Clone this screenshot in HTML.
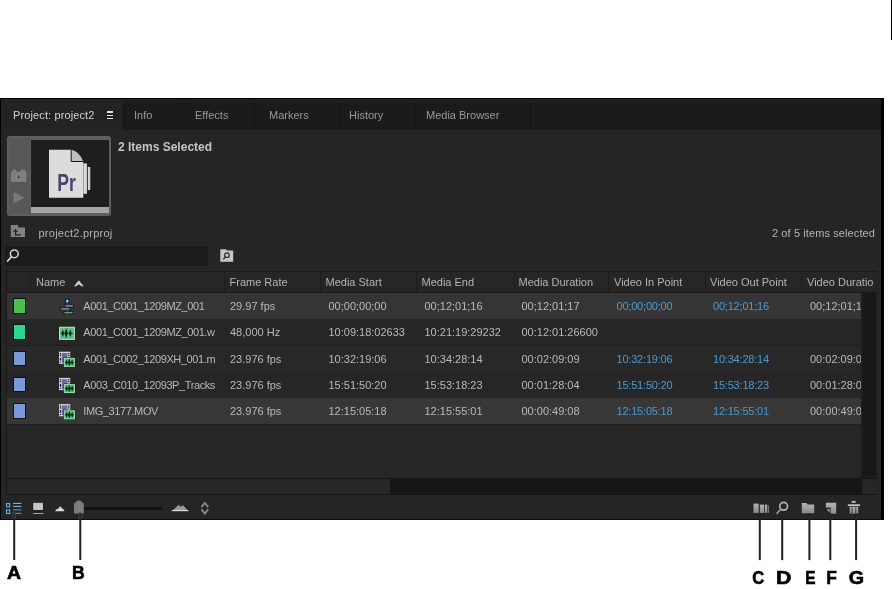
<!DOCTYPE html>
<html><head><meta charset="utf-8">
<style>
*{margin:0;padding:0;box-sizing:border-box}
html,body{width:892px;height:589px;overflow:hidden;background:#fff;position:relative}
body{font-family:"Liberation Sans",sans-serif}
.a{position:absolute}
#root{position:absolute;left:0;top:0;width:892px;height:589px;will-change:transform}
.t{position:absolute;white-space:pre;font-size:11px;line-height:11px;color:#b9b9b9}
</style></head><body><div id="root">
<div class="a" style="left:891px;top:0;width:1px;height:40px;background:#000"></div>
<div class="a" style="left:0;top:98px;width:884px;height:422px;background:#252525;border-left:1px solid #000;border-top:1px solid #000;border-right:3px solid #000;border-bottom:1px solid #0c0c0c"></div>
<div class="a" style="left:1px;top:99px;width:880px;height:30px;background:#1f1f1f"></div>
<div class="a" style="left:122px;top:103px;width:759px;height:25.5px;background:#1b1b1b"></div>
<div class="a" style="left:122px;top:128.5px;width:759px;height:1px;background:#181818"></div>
<div class="a" style="left:1px;top:99px;width:121px;height:30px;background:#232323"></div>
<div class="t" style="left:13px;top:109.5px;color:#d2d2d2;letter-spacing:0.12px">Project: project2</div>
<div class="a" style="left:107px;top:111.4px;width:6px;height:1.3px;background:#e4e4e4"></div>
<div class="a" style="left:107px;top:114.6px;width:6px;height:1.3px;background:#e4e4e4"></div>
<div class="a" style="left:107px;top:117.8px;width:6px;height:1.3px;background:#e4e4e4"></div>
<div class="a" style="left:182.5px;top:103px;width:2.5px;height:25px;background:#171717"></div>
<div class="a" style="left:253px;top:103px;width:2.5px;height:25px;background:#171717"></div>
<div class="a" style="left:337.5px;top:103px;width:2.5px;height:25px;background:#171717"></div>
<div class="a" style="left:413.5px;top:103px;width:2.5px;height:25px;background:#171717"></div>
<div class="a" style="left:529.3px;top:103px;width:2.5px;height:25px;background:#171717"></div>
<div class="t" style="left:134px;top:109.5px;color:#989898">Info</div>
<div class="t" style="left:195px;top:109.5px;color:#989898">Effects</div>
<div class="t" style="left:269px;top:109.5px;color:#989898">Markers</div>
<div class="t" style="left:349px;top:109.5px;color:#989898">History</div>
<div class="t" style="left:426px;top:109.5px;color:#989898">Media Browser</div>
<div class="a" style="left:7px;top:136px;width:104px;height:80px;background:#5e5e5e;border-radius:2.5px"></div>
<div class="a" style="left:9px;top:138px;width:21px;height:76px;background:#575757"></div>
<div class="a" style="left:31px;top:140px;width:78px;height:67px;background:#1e1e1e"></div>
<div class="a" style="left:31px;top:207px;width:78px;height:6px;background:#a6a6a6"></div>
<div class="t" style="left:118px;top:141.1px;font-size:12px;line-height:12px;font-weight:bold;color:#c4c4c4">2 Items Selected</div>
<div class="t" style="left:38.5px;top:227.7px;color:#b4b4b4;letter-spacing:0.25px">project2.prproj</div>
<div class="t" style="left:772px;top:227.8px;color:#b4b4b4;letter-spacing:0.1px">2 of 5 items selected</div>
<div class="a" style="left:5px;top:246px;width:203px;height:20px;background:#1c1c1c"></div>
<!-- thumbnail icons -->
<svg class="a" style="left:0;top:0" width="892" height="589" viewBox="0 0 892 589">
  <!-- camera -->
  <g fill="#7e7e7e">
    <rect x="11" y="171.5" width="15.5" height="10.5" rx="0.5"/>
    <rect x="12.5" y="169.5" width="3.5" height="2.5"/>
    <rect x="21" y="169.5" width="4" height="2.5"/>
  </g>
  <circle cx="18.7" cy="177" r="2.5" fill="#5a5a5a" stroke="#9a9a9a" stroke-width="1"/>
  <!-- play -->
  <path d="M13.5 192 L24.5 197.7 L13.5 203.4 Z" fill="#787878"/>
  <!-- project folder icon -->
  <path d="M10.8 225 H18.1 V227.5 H25 V237 H10.8 Z" fill="#828282"/>
  <path d="M15.6 229 V234.8 H20.8 M13.4 231.4 H17.6" fill="none" stroke="#1e1e1e" stroke-width="1.2"/>
  <!-- Pr doc -->
  <rect x="86.8" y="166.5" width="4" height="24.2" fill="#d2d2d2" stroke="#111" stroke-width="0.8"/>
  <rect x="83" y="163" width="4.3" height="31.2" fill="#dadada" stroke="#111" stroke-width="0.8"/>
  <path d="M49 149.8 H71.2 L83.3 161.5 V197.7 H49 Z" fill="#dcdcdc"/>
  <path d="M71.2 149.8 Q79 151 83.3 161.5 H71.2 Z" fill="#bdbdbd"/>
  <path d="M71.2 149.8 V161.5 H83.3" fill="none" stroke="#111" stroke-width="1"/>
  <text x="57.2" y="190.5" font-family="Liberation Sans" font-weight="bold" font-size="23.5" fill="#4e406c" textLength="18.6" lengthAdjust="spacingAndGlyphs">Pr</text>
  <!-- search magnifier -->
  <circle cx="14.3" cy="253.8" r="3.9" fill="none" stroke="#d4d4d4" stroke-width="1.5"/>
  <path d="M11.4 256.8 L7.6 261" stroke="#d4d4d4" stroke-width="1.8" stroke-linecap="round"/>
  <!-- folder search -->
  <path d="M220.3 249.3 H226 L227 250.6 H233.2 V261.7 H220.3 Z" fill="#c6c6c6"/>
  <circle cx="227" cy="255.2" r="2.3" fill="none" stroke="#2a2a2a" stroke-width="1.2"/>
  <path d="M225.4 257 L223.3 259.4" stroke="#2a2a2a" stroke-width="1.3"/>
</svg>
<div class="a" style="left:6px;top:271px;width:871px;height:1px;background:#1a1a1a"></div>
<div class="a" style="left:6px;top:272px;width:871px;height:20px;background:#262626"></div>
<div class="a" style="left:6px;top:292px;width:871px;height:1px;background:#1a1a1a"></div>
<div class="a" style="left:6px;top:271px;width:1px;height:223px;background:#1a1a1a"></div>
<div class="a" style="left:7px;top:293px;width:854px;height:185px;background:#262626"></div>
<div class="a" style="left:861px;top:293px;width:16px;height:185px;background:#1d1d1d"></div>
<div class="a" style="left:863px;top:293px;width:13px;height:182px;background:#181818"></div>
<div class="a" style="left:6px;top:478px;width:871px;height:1px;background:#141414"></div>
<div class="a" style="left:7px;top:479px;width:383px;height:15px;background:#272727"></div>
<div class="a" style="left:390px;top:479px;width:472px;height:15px;background:#161616"></div>
<div class="a" style="left:862px;top:479px;width:15px;height:15px;background:#262626"></div>
<div class="a" style="left:6px;top:494px;width:871px;height:1px;background:#141414"></div>
<div class="a" style="left:30px;top:272px;width:1px;height:20px;background:#1c1c1c"></div>
<div class="a" style="left:224px;top:272px;width:1px;height:20px;background:#1c1c1c"></div>
<div class="a" style="left:320px;top:272px;width:1px;height:20px;background:#1c1c1c"></div>
<div class="a" style="left:416px;top:272px;width:1px;height:20px;background:#1c1c1c"></div>
<div class="a" style="left:514px;top:272px;width:1px;height:20px;background:#1c1c1c"></div>
<div class="a" style="left:608px;top:272px;width:1px;height:20px;background:#1c1c1c"></div>
<div class="a" style="left:705px;top:272px;width:1px;height:20px;background:#1c1c1c"></div>
<div class="a" style="left:801px;top:272px;width:1px;height:20px;background:#1c1c1c"></div>
<div class="t" style="left:36px;top:277.2px;color:#b4b4b4">Name</div>
<div class="t" style="left:229.5px;top:277.2px;color:#b4b4b4">Frame Rate</div>
<div class="t" style="left:325.5px;top:277.2px;color:#b4b4b4">Media Start</div>
<div class="t" style="left:421.5px;top:277.2px;color:#b4b4b4">Media End</div>
<div class="t" style="left:518.5px;top:277.2px;color:#b4b4b4">Media Duration</div>
<div class="t" style="left:614px;top:277.2px;color:#b4b4b4">Video In Point</div>
<div class="t" style="left:710px;top:277.2px;color:#b4b4b4">Video Out Point</div>
<div class="t" style="left:807px;top:277.2px;color:#b4b4b4">Video Duratio</div>
<div class="a" style="left:7px;top:293px;width:854px;height:132px;overflow:hidden">
<div class="a" style="left:0;top:0px;width:855px;height:27px;background:#353535"></div>
<div class="a" style="left:0;top:26px;width:855px;height:1px;background:#1e1e1e"></div>
<div class="a" style="left:5.5px;top:5px;width:13.5px;height:15.5px;background:#4cbe4c;border:1px solid #101010"></div>
<div class="t" style="left:76.3px;top:8.20px;width:137px;overflow:hidden;letter-spacing:-0.4px;color:#b9b9b9">A001_C001_1209MZ_001</div>
<div class="t" style="left:223px;top:8.20px;color:#b9b9b9">29.97 fps</div>
<div class="t" style="left:321.5px;top:8.20px;color:#b9b9b9">00;00;00;00</div>
<div class="t" style="left:417.5px;top:8.20px;color:#b9b9b9">00;12;01;16</div>
<div class="t" style="left:514.5px;top:8.20px;color:#b9b9b9">00;12;01;17</div>
<div class="t" style="left:609.5px;top:8.20px;letter-spacing:-0.2px;color:#4c9bd2">00;00;00;00</div>
<div class="t" style="left:706px;top:8.20px;letter-spacing:-0.2px;color:#4c9bd2">00;12;01;16</div>
<div class="t" style="left:803px;top:8.20px;color:#b9b9b9">00;12;01;17</div>
<div class="a" style="left:0;top:26px;width:855px;height:27.5px;background:#262626"></div>
<div class="a" style="left:0;top:52px;width:855px;height:1px;background:#1e1e1e"></div>
<div class="a" style="left:5.5px;top:31px;width:13.5px;height:15.5px;background:#2dd58e;border:1px solid #101010"></div>
<div class="t" style="left:76.3px;top:34.20px;width:137px;overflow:hidden;letter-spacing:-0.4px;color:#b9b9b9">A001_C001_1209MZ_001.w</div>
<div class="t" style="left:223px;top:34.20px;color:#b9b9b9">48,000 Hz</div>
<div class="t" style="left:321.5px;top:34.20px;color:#b9b9b9">10:09:18:02633</div>
<div class="t" style="left:417.5px;top:34.20px;color:#b9b9b9">10:21:19:29232</div>
<div class="t" style="left:514.5px;top:34.20px;color:#b9b9b9">00:12:01:26600</div>
<div class="a" style="left:0;top:52.5px;width:855px;height:27.0px;background:#282828"></div>
<div class="a" style="left:0;top:78.5px;width:855px;height:1px;background:#1e1e1e"></div>
<div class="a" style="left:5.5px;top:57.5px;width:13.5px;height:15.5px;background:#7a9ad8;border:1px solid #101010"></div>
<div class="t" style="left:76.3px;top:60.70px;width:137px;overflow:hidden;letter-spacing:-0.4px;color:#b9b9b9">A001_C002_1209XH_001.m</div>
<div class="t" style="left:223px;top:60.70px;color:#b9b9b9">23.976 fps</div>
<div class="t" style="left:321.5px;top:60.70px;color:#b9b9b9">10:32:19:06</div>
<div class="t" style="left:417.5px;top:60.70px;color:#b9b9b9">10:34:28:14</div>
<div class="t" style="left:514.5px;top:60.70px;color:#b9b9b9">00:02:09:09</div>
<div class="t" style="left:609.5px;top:60.70px;letter-spacing:-0.2px;color:#4c9bd2">10:32:19:06</div>
<div class="t" style="left:706px;top:60.70px;letter-spacing:-0.2px;color:#4c9bd2">10:34:28:14</div>
<div class="t" style="left:803px;top:60.70px;color:#b9b9b9">00:02:09:09</div>
<div class="a" style="left:0;top:78.5px;width:855px;height:27.5px;background:#262626"></div>
<div class="a" style="left:0;top:105px;width:855px;height:1px;background:#1e1e1e"></div>
<div class="a" style="left:5.5px;top:83.5px;width:13.5px;height:15.5px;background:#7a9ad8;border:1px solid #101010"></div>
<div class="t" style="left:76.3px;top:86.70px;width:137px;overflow:hidden;letter-spacing:-0.4px;color:#b9b9b9">A003_C010_12093P_Tracks</div>
<div class="t" style="left:223px;top:86.70px;color:#b9b9b9">23.976 fps</div>
<div class="t" style="left:321.5px;top:86.70px;color:#b9b9b9">15:51:50:20</div>
<div class="t" style="left:417.5px;top:86.70px;color:#b9b9b9">15:53:18:23</div>
<div class="t" style="left:514.5px;top:86.70px;color:#b9b9b9">00:01:28:04</div>
<div class="t" style="left:609.5px;top:86.70px;letter-spacing:-0.2px;color:#4c9bd2">15:51:50:20</div>
<div class="t" style="left:706px;top:86.70px;letter-spacing:-0.2px;color:#4c9bd2">15:53:18:23</div>
<div class="t" style="left:803px;top:86.70px;color:#b9b9b9">00:01:28:04</div>
<div class="a" style="left:0;top:105px;width:855px;height:27px;background:#373737"></div>
<div class="a" style="left:0;top:131px;width:855px;height:1px;background:#1e1e1e"></div>
<div class="a" style="left:5.5px;top:110px;width:13.5px;height:15.5px;background:#7a9ad8;border:1px solid #101010"></div>
<div class="t" style="left:76.3px;top:113.20px;width:137px;overflow:hidden;letter-spacing:-0.4px;color:#b9b9b9">IMG_3177.MOV</div>
<div class="t" style="left:223px;top:113.20px;color:#b9b9b9">23.976 fps</div>
<div class="t" style="left:321.5px;top:113.20px;color:#b9b9b9">12:15:05:18</div>
<div class="t" style="left:417.5px;top:113.20px;color:#b9b9b9">12:15:55:01</div>
<div class="t" style="left:514.5px;top:113.20px;color:#b9b9b9">00:00:49:08</div>
<div class="t" style="left:609.5px;top:113.20px;letter-spacing:-0.2px;color:#4c9bd2">12:15:05:18</div>
<div class="t" style="left:706px;top:113.20px;letter-spacing:-0.2px;color:#4c9bd2">12:15:55:01</div>
<div class="t" style="left:803px;top:113.20px;color:#b9b9b9">00:00:49:08</div>
</div>
<!-- row icons -->
<svg class="a" style="left:0;top:0" width="892" height="589" viewBox="0 0 892 589">
  <path d="M73.6 286.6 L78.8 280 L84.1 286.6 L81.6 286.6 L78.8 284.4 L76.1 286.6 Z" fill="#d4d4d4" stroke="#141414" stroke-width="0.4"/>
  <rect x="65.6" y="299.3" width="3.4" height="3.6" fill="#7ad8f8" stroke="#06121c" stroke-width="0.9"/>
  <rect x="64.9" y="304.9" width="8.5" height="2.1" fill="#a8c0e8" stroke="#0a0a16" stroke-width="0.9"/>
  <rect x="60.8" y="307.9" width="9.2" height="2.1" fill="#a8c0e8" stroke="#0a0a16" stroke-width="0.9"/>
  <rect x="63.9" y="311.7" width="9.2" height="2.1" fill="#5ad890" stroke="#06140a" stroke-width="0.9"/>
  <rect x="66.8" y="303" width="0.8" height="13.2" fill="#b83848"/>
  <rect x="58.6" y="326.4" width="16.6" height="13.8" fill="#101810"/>
  <rect x="59" y="326.7" width="15.9" height="13.2" fill="#b4ecc8"/>
  <rect x="60" y="327.7" width="13.9" height="11.2" fill="#5cbe88"/>
  <path d="M62.8 329.7 L64.3 333.3 L62.8 336.9 L61.3 333.3 Z M66.2 328.3 L67.9 333.3 L66.2 338.3 L64.5 333.3 Z M70.3 329.7 L71.8 333.3 L70.3 336.9 L68.8 333.3 Z " fill="#0a3018"/><rect x="60.6" y="332.9" width="12.6" height="0.8" fill="#0a3018"/>

  <rect x="59" y="351.7" width="11.2" height="12.2" fill="#d6d4dc"/>
  <rect x="61.8" y="353.0" width="5.6" height="9.6" fill="#6e6aa6"/>
  <g fill="#111">
    <rect x="59.8" y="353.0" width="1.3" height="1.2"/><rect x="59.8" y="354.9" width="1.3" height="1.2"/><rect x="59.8" y="357.9" width="1.3" height="2.6"/><rect x="59.8" y="361.7" width="1.3" height="1"/>
    <rect x="68.1" y="353.0" width="1.3" height="1.2"/><rect x="68.1" y="354.9" width="1.3" height="1.2"/>
  </g>
  <rect x="63.3" y="357.4" width="12.1" height="9.7" fill="#101810"/>
  <rect x="63.8" y="357.9" width="11.1" height="9" fill="#a8e8c0"/>
  <rect x="64.6" y="358.7" width="9.5" height="7.4" fill="#4cba7c"/>
  <path d="M66.6 359.5 L67.9 362.4 L66.6 365.3 L65.3 362.4 Z M69.3 358.6 L70.8 362.4 L69.3 366.2 L67.8 362.4 Z M72.2 359.5 L73.5 362.4 L72.2 365.3 L70.9 362.4 Z " fill="#0a3018"/><rect x="64.9" y="362.0" width="8.9" height="0.8" fill="#0a3018"/>
  <rect x="59" y="377.9" width="11.2" height="12.2" fill="#d6d4dc"/>
  <rect x="61.8" y="379.2" width="5.6" height="9.6" fill="#6e6aa6"/>
  <g fill="#111">
    <rect x="59.8" y="379.2" width="1.3" height="1.2"/><rect x="59.8" y="381.1" width="1.3" height="1.2"/><rect x="59.8" y="384.1" width="1.3" height="2.6"/><rect x="59.8" y="387.9" width="1.3" height="1"/>
    <rect x="68.1" y="379.2" width="1.3" height="1.2"/><rect x="68.1" y="381.1" width="1.3" height="1.2"/>
  </g>
  <rect x="63.3" y="383.6" width="12.1" height="9.7" fill="#101810"/>
  <rect x="63.8" y="384.1" width="11.1" height="9" fill="#a8e8c0"/>
  <rect x="64.6" y="384.9" width="9.5" height="7.4" fill="#4cba7c"/>
  <path d="M66.6 385.7 L67.9 388.6 L66.6 391.5 L65.3 388.6 Z M69.3 384.8 L70.8 388.6 L69.3 392.4 L67.8 388.6 Z M72.2 385.7 L73.5 388.6 L72.2 391.5 L70.9 388.6 Z " fill="#0a3018"/><rect x="64.9" y="388.2" width="8.9" height="0.8" fill="#0a3018"/>
  <rect x="59" y="404.1" width="11.2" height="12.2" fill="#d6d4dc"/>
  <rect x="61.8" y="405.4" width="5.6" height="9.6" fill="#6e6aa6"/>
  <g fill="#111">
    <rect x="59.8" y="405.4" width="1.3" height="1.2"/><rect x="59.8" y="407.3" width="1.3" height="1.2"/><rect x="59.8" y="410.3" width="1.3" height="2.6"/><rect x="59.8" y="414.1" width="1.3" height="1"/>
    <rect x="68.1" y="405.4" width="1.3" height="1.2"/><rect x="68.1" y="407.3" width="1.3" height="1.2"/>
  </g>
  <rect x="63.3" y="409.8" width="12.1" height="9.7" fill="#101810"/>
  <rect x="63.8" y="410.3" width="11.1" height="9" fill="#a8e8c0"/>
  <rect x="64.6" y="411.1" width="9.5" height="7.4" fill="#4cba7c"/>
  <path d="M66.6 411.9 L67.9 414.8 L66.6 417.7 L65.3 414.8 Z M69.3 411.0 L70.8 414.8 L69.3 418.6 L67.8 414.8 Z M72.2 411.9 L73.5 414.8 L72.2 417.7 L70.9 414.8 Z " fill="#0a3018"/><rect x="64.9" y="414.4" width="8.9" height="0.8" fill="#0a3018"/>
</svg>
<!-- bottom toolbar -->
<svg class="a" style="left:0;top:0" width="892" height="589" viewBox="0 0 892 589">
  <defs>
    <linearGradient id="ig" x1="0" y1="0" x2="0" y2="1">
      <stop offset="0" stop-color="#b4b4b4"/><stop offset="1" stop-color="#8a8a8a"/>
    </linearGradient>
  </defs>
  <!-- list view (blue) -->
  <g fill="none" stroke="#5fb4dc" stroke-width="1.1">
    <rect x="6.5" y="503.6" width="3.2" height="3.2"/>
    <rect x="6.5" y="510" width="3.2" height="3.5"/>
  </g>
  <g fill="#6cb8e0">
    <rect x="13.1" y="502.9" width="8.4" height="1.1"/>
    <rect x="13.1" y="505.9" width="8.4" height="1.1"/>
  </g>
  <g fill="#4a98c0">
    <rect x="13.1" y="509.3" width="8.4" height="1.1"/>
    <rect x="13.1" y="512.9" width="8.4" height="1.1"/>
  </g>
  <!-- icon view -->
  <rect x="32.6" y="502.3" width="10.8" height="8.2" fill="#151515"/><rect x="33.2" y="502.8" width="9.8" height="7.2" fill="#c4c4c4"/>
  <rect x="33.3" y="513" width="10" height="1" fill="#a8a8a8"/>
  <!-- small mountain -->
  <path d="M54.9 511.2 L56.2 509.6 L58.3 508.6 L60.3 506.3 L62.3 508.6 L64.1 510 L64.3 511.2 Z" fill="#d8d8d8"/>
  <!-- slider track -->
  <rect x="83" y="507" width="79.5" height="3" fill="#141414"/>
  <!-- slider handle -->
  <path d="M74 513.6 V504.5 Q74 502.6 76 502 L77.5 500.6 H80.3 L81.8 502 Q83.8 502.6 83.8 504.5 V513.6 Z" fill="#7c7c7c"/>
  <!-- big mountain -->
  <path d="M171.8 511.1 L177 506.5 L178.6 504.8 L180.5 506.8 L183 505.2 L188.4 511.1 Z" fill="#9a9a9a"/>
  <rect x="171.8" y="510" width="16.6" height="1.2" fill="#d8d8d8"/>
  <!-- up/down chevrons -->
  <path d="M201.4 507.2 L204.8 503 L208.2 507.2" fill="none" stroke="#8a8a8a" stroke-width="1.9"/>
  <path d="M201.4 509.4 L204.8 513.6 L208.2 509.4" fill="none" stroke="#8a8a8a" stroke-width="1.9"/>

  <!-- C: storyboard -->
  <rect x="753.5" y="503.6" width="5.1" height="9.3" fill="url(#ig)"/>
  <rect x="759.8" y="504.6" width="4.3" height="8.3" fill="url(#ig)"/>
  <rect x="764.9" y="504.6" width="2.4" height="8.3" fill="url(#ig)"/>
  <rect x="768.2" y="505.5" width="0.8" height="7.4" fill="#8a8a8a"/>
  <!-- D: find -->
  <circle cx="783.6" cy="506.3" r="3.9" fill="none" stroke="#b4b4b4" stroke-width="1.7"/>
  <path d="M780.7 509.3 L777 513.4" stroke="#9a9a9a" stroke-width="1.6" stroke-linecap="round"/>
  <!-- E: folder -->
  <path d="M801.8 503 H806.5 L807.4 504.6 H814.2 V513.3 H801.8 Z" fill="url(#ig)"/>
  <!-- F: new item -->
  <path d="M825.9 502.7 H836.2 V513.8 H830.6 V507.6 H825.9 Z" fill="url(#ig)"/>
  <path d="M826.8 509.2 H829.6 V512.6 Z" fill="#b0b0b0"/>
  <!-- G: trash -->
  <rect x="851.7" y="500.9" width="3.9" height="1.9" fill="#c0c0c0"/>
  <rect x="847.8" y="504.3" width="12.2" height="1.8" fill="#c4c4c4"/>
  <rect x="849.7" y="506.8" width="8.5" height="6.8" fill="url(#ig)"/>
  <rect x="851.6" y="507.4" width="1" height="6" fill="#3a3a3a"/>
  <rect x="855.3" y="507.4" width="1" height="6" fill="#3a3a3a"/>

  <g fill="#4c4c4c">
    <rect x="12.4" y="512.5" width="3.6" height="6.5"/>
    <rect x="78.5" y="512.5" width="3.6" height="6.5"/>
  </g>
  <!-- annotation lines -->
  <g fill="#222">
    <rect x="13.2" y="513.5" width="2" height="46.5"/>
    <rect x="79.3" y="513.5" width="2" height="46.5"/>
    <rect x="758.8" y="513.3" width="2" height="46.8"/>
    <rect x="781.2" y="513.3" width="2" height="46.8"/>
    <rect x="808.4" y="513.5" width="2" height="46.6"/>
    <rect x="829.3" y="513.5" width="2" height="46.6"/>
    <rect x="855.1" y="513.5" width="2" height="46.6"/>
  </g>
</svg>
<svg class="a" style="left:0;top:0" width="892" height="589" viewBox="0 0 892 589">
<g font-family="Liberation Sans" font-weight="bold" fill="#000" stroke="#000" stroke-width="0.6">
<text transform="translate(7.11,579.20) scale(1.045,1)" font-size="18.57">A</text>
<text transform="translate(71.95,579.20) scale(0.933,1)" font-size="18.84">B</text>
<text transform="translate(752.24,583.52) scale(0.931,1)" font-size="17.75">C</text>
<text transform="translate(776.12,583.70) scale(1.165,1)" font-size="18.26">D</text>
<text transform="translate(805.17,583.70) scale(0.845,1)" font-size="18.26">E</text>
<text transform="translate(826.26,583.52) scale(0.962,1)" font-size="18.00">F</text>
<text transform="translate(848.71,583.52) scale(1.110,1)" font-size="17.75">G</text>
</g></svg>
</div></body></html>
